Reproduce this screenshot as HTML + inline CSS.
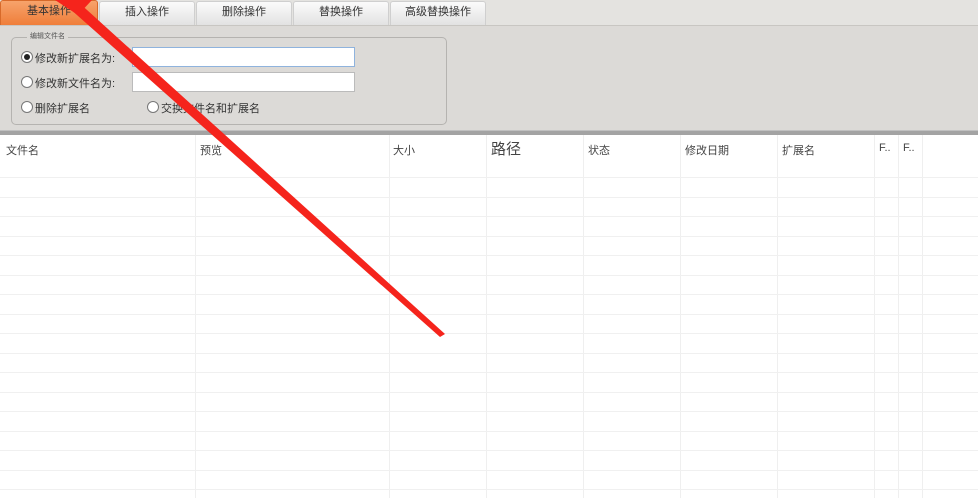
<!DOCTYPE html>
<html><head><meta charset="utf-8"><style>
body{margin:0;width:978px;height:498px;overflow:hidden;background:#fff;font-family:"Liberation Sans","Noto Sans CJK SC",sans-serif;font-size:11px;color:#333;position:relative}
.top{position:absolute;left:0;top:0;width:978px;height:131px;background:#dcdad7}
.tabbar{position:absolute;left:0;top:0;width:978px;height:25px;background:#e4e3e0;border-bottom:1px solid #c8c6c2}
.tab{position:absolute;top:1px;height:23px;width:94px;background:linear-gradient(#fbfbfb,#e2e2e2);border:1px solid #cfcfcf;border-bottom:none;border-radius:3px 3px 0 0;text-align:center;line-height:20px;font-size:11px;color:#333}
.tab.on{background:linear-gradient(#f7a36b,#ef7e3a);border-color:#d86a2a;top:0;height:24px;left:0;width:96px}
.sep{position:absolute;left:0;top:130px;width:978px;height:4px;background:#a3a3a3;border-top:1px solid #c0c0c0}
.grp{position:absolute;left:11px;top:37px;width:434px;height:86px;border:1px solid #b5b3b0;border-radius:5px}
.lg{position:absolute;left:27px;top:31px;font-size:7px;color:#555;background:#dcdad7;padding:0 3px}
.rb{position:absolute;width:10px;height:10px;border:1px solid #777;border-radius:50%;background:#fff}
.rb.on::after{content:"";position:absolute;left:2px;top:2px;width:6px;height:6px;border-radius:50%;background:#222}
.lb{position:absolute;font-size:11px;color:#333}
.in{position:absolute;left:132px;width:221px;height:18px;background:#fff;border:1px solid #bbb}
.vl{position:absolute;top:135px;bottom:0;width:1px;background:#efefef}
.hl{position:absolute;left:0;width:978px;height:1px;background:#f0f0f0}
.h{position:absolute;top:142px;font-size:11px;color:#444}
</style></head><body>
<div class="top"></div>
<div class="tabbar"></div>
<div class="tab on">基本操作</div>
<div class="tab" style="left:99px">插入操作</div>
<div class="tab" style="left:196px">删除操作</div>
<div class="tab" style="left:293px">替换操作</div>
<div class="tab" style="left:390px">高级替换操作</div>
<div class="grp"></div>
<div class="lg">编辑文件名</div>
<div class="rb on" style="left:21px;top:51px"></div><div class="lb" style="left:35px;top:50px">修改新扩展名为:</div>
<div class="in" style="top:47px;border-color:#8fb3dd"></div>
<div class="rb" style="left:21px;top:76px"></div><div class="lb" style="left:35px;top:75px">修改新文件名为:</div>
<div class="in" style="top:72px"></div>
<div class="rb" style="left:21px;top:101px"></div><div class="lb" style="left:35px;top:100px">删除扩展名</div>
<div class="rb" style="left:147px;top:101px"></div><div class="lb" style="left:161px;top:100px">交换文件名和扩展名</div>
<div class="sep"></div>
<div class="vl" style="left:195px"></div><div class="vl" style="left:389px"></div><div class="vl" style="left:486px"></div><div class="vl" style="left:583px"></div><div class="vl" style="left:680px"></div><div class="vl" style="left:777px"></div><div class="vl" style="left:874px"></div><div class="vl" style="left:898px"></div><div class="vl" style="left:922px"></div>
<div class="hl" style="top:177px"></div><div class="hl" style="top:197px"></div><div class="hl" style="top:216px"></div><div class="hl" style="top:236px"></div><div class="hl" style="top:255px"></div><div class="hl" style="top:275px"></div><div class="hl" style="top:294px"></div><div class="hl" style="top:314px"></div><div class="hl" style="top:333px"></div><div class="hl" style="top:353px"></div><div class="hl" style="top:372px"></div><div class="hl" style="top:392px"></div><div class="hl" style="top:411px"></div><div class="hl" style="top:431px"></div><div class="hl" style="top:450px"></div><div class="hl" style="top:470px"></div><div class="hl" style="top:489px"></div>
<div class="h" style="left:6px">文件名</div><div class="h" style="left:200px">预览</div><div class="h" style="left:393px">大小</div><div class="h" style="left:491px;top:138px;font-size:15px">路径</div><div class="h" style="left:588px">状态</div><div class="h" style="left:685px">修改日期</div><div class="h" style="left:782px">扩展名</div><div class="h" style="left:879px">F..</div><div class="h" style="left:903px">F..</div>
<svg style="position:absolute;left:0;top:0" width="978" height="498"><polygon points="60,0 76,0 445,334 440,337" fill="#f5241c"/><polygon points="55,0 92,0 78,15" fill="#f5241c"/></svg>
</body></html>
